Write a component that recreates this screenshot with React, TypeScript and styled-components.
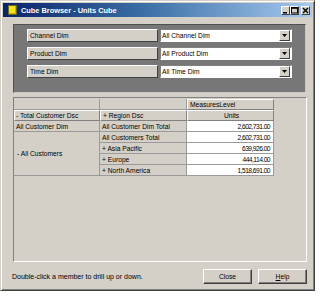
import styled, { createGlobalStyle } from 'styled-components'

const GlobalStyle = createGlobalStyle`
  html, body {
    margin: 0;
    padding: 0;
    background: #ffffff;
  }
  body {
    font-family: 'Liberation Sans', Arial, sans-serif;
  }
`

const dims = [
  { label: 'Channel Dim', value: 'All Channel Dim' },
  { label: 'Product Dim', value: 'All Product Dim' },
  { label: 'Time Dim', value: 'All Time Dim' },
]

const regions = [
  { name: 'All Customers Total', units: '2,602,731.00' },
  { name: '+  Asia Pacific', units: '639,926.00' },
  { name: '+  Europe', units: '444,114.00' },
  { name: '+  North America', units: '1,518,691.00' },
]

const App = () => {
  return (
    <>
      <GlobalStyle />
      <Window>
        <TitleBar>
          <TitleIcon />
          <Title>Cube Browser - Units Cube</Title>
          <Caption>
            <CaptionButton>
              <svg width="7" height="7" viewBox="0 0 7 7"><rect x="1" y="5" width="4" height="1.5" fill="#000" /></svg>
            </CaptionButton>
            <CaptionButton>
              <svg width="7" height="7" viewBox="0 0 7 7"><rect x="0.5" y="0.5" width="6" height="5.5" fill="none" stroke="#000" strokeWidth="1" /><rect x="0.5" y="0.5" width="6" height="1.3" fill="#000" /></svg>
            </CaptionButton>
            <CaptionButton $gap>
              <svg width="7" height="7" viewBox="0 0 7 7"><path d="M1 1 L6 6 M6 1 L1 6" stroke="#000" strokeWidth="1.4" /></svg>
            </CaptionButton>
          </Caption>
        </TitleBar>

        <FilterPanel>
          {dims.map((d) => (
            <FilterRow key={d.label}>
              <DimLabel>{d.label}</DimLabel>
              <Combo>
                <ComboText>{d.value}</ComboText>
                <ComboButton>
                  <svg width="5" height="3" viewBox="0 0 5 3"><path d="M0 0 H5 L2.5 3 Z" fill="#000" /></svg>
                </ComboButton>
              </Combo>
            </FilterRow>
          ))}
        </FilterPanel>

        <GridPanel>
          <Grid>
            <Cell />
            <Cell />
            <HeadCell>MeasuresLevel</HeadCell>

            <HeadCell $selected>- Total Customer Dsc</HeadCell>
            <HeadCell>+ Region Dsc</HeadCell>
            <HeadCell $center>Units</HeadCell>

            <Cell>All Customer Dim</Cell>
            <Cell>All Customer Dim Total</Cell>
            <ValueCell>2,602,731.00</ValueCell>

            <MergedCell>-  All Customers</MergedCell>
            {regions.map((r) => (
              <RegionRow key={r.name}>
                <Cell>{r.name}</Cell>
                <ValueCell>{r.units}</ValueCell>
              </RegionRow>
            ))}
          </Grid>
        </GridPanel>

        <Footer>
          <Hint>Double-click a member to drill up or down.</Hint>
          <Buttons>
            <PushButton>Close</PushButton>
            <PushButton><u>H</u>elp</PushButton>
          </Buttons>
        </Footer>
      </Window>
    </>
  )
}

export default App

const face = '#d4d0c8'

const Window = styled.div`
  box-sizing: border-box;
  width: 315px;
  height: 291px;
  background: ${face};
  border: 1px solid;
  border-color: ${face} #404040 #404040 ${face};
  box-shadow: inset 1px 1px #ffffff, inset -1px -1px #808080;
  padding: 2px;
  display: flex;
  flex-direction: column;
  font-size: 6.7px;
  color: #000;
`

const TitleBar = styled.div`
  height: 14px;
  display: flex;
  align-items: center;
  padding: 0 2px 0 5px;
  background: linear-gradient(to right, #0a246a 0%, #3a6ea5 45%, #a6caf0 100%);
`

const TitleIcon = styled.div`
  width: 7px;
  height: 8px;
  background: #f6e21a;
  border: 1px solid #6d6a14;
  box-shadow: inset -1px -1px #c9b400;
  margin-right: 4px;
`

const Title = styled.span`
  color: #ffffff;
  font-weight: bold;
  font-size: 7.4px;
  flex: 1;
`

const Caption = styled.div`
  display: flex;
  align-items: center;
`

const CaptionButton = styled.div<{ $gap?: boolean }>`
  box-sizing: border-box;
  width: 9px;
  height: 9px;
  margin-left: ${(p) => (p.$gap ? '2px' : '0')};
  background: ${face};
  border: 1px solid;
  border-color: #ffffff #404040 #404040 #ffffff;
  display: flex;
  align-items: center;
  justify-content: center;
  svg { display: block; }
`

const FilterPanel = styled.div`
  box-sizing: border-box;
  width: 293px;
  height: 69px;
  margin: 7px 0 0 10px;
  padding: 4px 13px 0;
  background: #777777;
  border: 1px solid;
  border-color: #505050 #c8c8c8 #c8c8c8 #505050;
  display: flex;
  flex-direction: column;
  gap: 5px;
`

const FilterRow = styled.div`
  display: flex;
  height: 13px;
  gap: 2px;
`

const DimLabel = styled.div`
  box-sizing: border-box;
  width: 131px;
  background: ${face};
  border: 1px solid;
  border-color: #ffffff #404040 #404040 #ffffff;
  padding-left: 2px;
  display: flex;
  align-items: center;
`

const Combo = styled.div`
  box-sizing: border-box;
  width: 132px;
  background: #ffffff;
  border: 1px solid;
  border-color: #808080 #ffffff #ffffff #808080;
  display: flex;
  align-items: center;
`

const ComboText = styled.span`
  flex: 1;
  padding-left: 1px;
`

const ComboButton = styled.div`
  box-sizing: border-box;
  width: 11px;
  height: 11px;
  margin-right: 1px;
  background: ${face};
  border: 1px solid;
  border-color: #ffffff #404040 #404040 #ffffff;
  display: flex;
  align-items: center;
  justify-content: center;
  svg { display: block; }
`

const GridPanel = styled.div`
  box-sizing: border-box;
  width: 294px;
  height: 165px;
  margin: 4px 0 0 10px;
  padding: 1px 0 0 0;
  background: ${face};
  border: 1px solid;
  border-color: #808080 #ffffff #ffffff #808080;
`

const Grid = styled.div`
  display: grid;
  grid-template-columns: 86px 87px 87px;
  grid-template-rows: repeat(7, 11px);
`

const Cell = styled.div`
  box-sizing: border-box;
  border-right: 1px solid #9a9a9a;
  border-bottom: 1px solid #9a9a9a;
  padding-left: 2px;
  display: flex;
  align-items: center;
  white-space: nowrap;
  overflow: hidden;
`

const HeadCell = styled(Cell)<{ $center?: boolean; $selected?: boolean }>`
  border: 1px solid;
  border-color: #ffffff #808080 #808080 #ffffff;
  justify-content: ${(p) => (p.$center ? 'center' : 'flex-start')};
  padding-left: ${(p) => (p.$selected ? '1px' : '2px')};
`

const ValueCell = styled(Cell)`
  background: #ffffff;
  justify-content: flex-end;
  padding: 0 3px 0 0;
  letter-spacing: -0.55px;
`

const MergedCell = styled(Cell)`
  grid-column: 1;
  grid-row: 4 / span 4;
  padding-left: 3px;
`

const RegionRow = styled.div`
  display: contents;
`

const Footer = styled.div`
  display: flex;
  align-items: center;
  justify-content: space-between;
  margin: 7px 5px 0 9px;
  height: 15px;
`

const Hint = styled.span`
  font-size: 7px;
`

const Buttons = styled.div`
  display: flex;
  gap: 6px;
`

const PushButton = styled.div`
  box-sizing: border-box;
  width: 49px;
  height: 15px;
  background: ${face};
  border: 1px solid;
  border-color: #ffffff #404040 #404040 #ffffff;
  box-shadow: inset -1px -1px #808080;
  display: flex;
  align-items: center;
  justify-content: center;
`
